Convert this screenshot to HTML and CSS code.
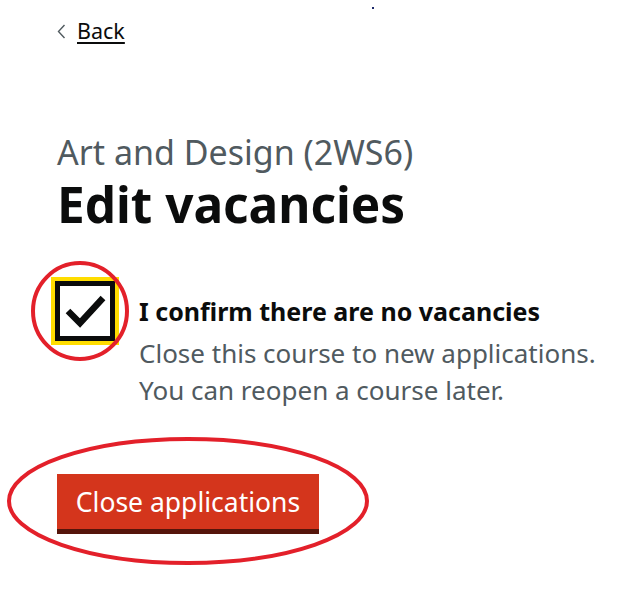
FILE: index.html
```html
<!DOCTYPE html>
<html lang="en">
<head>
<meta charset="utf-8">
<title>Edit vacancies</title>
<link rel="stylesheet" href="styles.css">
</head>
<body>
<div class="page">
  <span class="dot"></span>
  <a class="back" href="#"><svg class="chev" width="9" height="15" viewBox="0 0 9 15"><path d="M7.5 1 L1.5 7.5 L7.5 14" fill="none" stroke="#505a5f" stroke-width="1.4"/></svg><span class="back-text">Back</span></a>
  <span class="caption">Art and Design (2WS6)</span>
  <h1 class="title">Edit vacancies</h1>
  <div class="check">
    <div class="box-wrap">
      <div class="box">
        <svg class="tick" width="50" height="50" viewBox="0 0 50 50"><path d="M8 25 L20 37 L43 12" fill="none" stroke="#0b0c0c" stroke-width="6.5"/></svg>
      </div>
      <svg class="ring" width="104" height="104" viewBox="0 0 104 104"><ellipse cx="52" cy="52" rx="47" ry="48" fill="none" stroke="#e3202a" stroke-width="4"/></svg>
    </div>
    <div class="check-text">
      <div class="label">I confirm there are no vacancies</div>
      <div class="hint">Close this course to new applications.<br>You can reopen a course later.</div>
    </div>
  </div>
  <div class="btn-wrap">
    <button class="btn">Close applications</button>
    <svg class="oval" width="366" height="132" viewBox="0 0 366 132"><ellipse cx="183" cy="66" rx="179" ry="62" fill="none" stroke="#e3202a" stroke-width="4"/></svg>
  </div>
</div>
</body>
</html>
```

FILE: styles.css
```css
html, body {
  margin: 0;
  padding: 0;
  background: #ffffff;
}
body {
  font-family: "Noto Sans", "Liberation Sans", sans-serif;
  color: #0b0c0c;
}
.page {
  position: relative;
  padding: 18px 0 0 57px;
  width: 560px;
  height: 577px;
}
.dot {
  position: absolute;
  left: 372px;
  top: 7px;
  width: 2px;
  height: 2px;
  background: #1d2a6a;
}
.back {
  display: inline-flex;
  align-items: center;
  gap: 11px;
  color: #0b0c0c;
  text-decoration: none;
  font-size: 21.5px;
  line-height: 25px;
  height: 25px;
}
.chev {
  display: block;
  margin-top: 2px;
}
.back-text {
  text-decoration: underline;
  text-decoration-thickness: 2px;
  text-underline-offset: 3px;
}
.caption {
  display: block;
  margin-top: 89px;
  font-size: 34px;
  line-height: 38px;
  color: #505a5f;
}
.title {
  margin: 6px 0 0 0;
  font-size: 49.5px;
  line-height: 55px;
  font-weight: 700;
}
.check {
  display: flex;
  align-items: flex-start;
  margin-top: 45px;
  margin-left: -6px;
}
.box-wrap {
  position: relative;
  width: 68px;
  height: 68px;
  flex: none;
}
.box {
  margin: 4px;
  width: 50px;
  height: 50px;
  border: 5px solid #0b0c0c;
  background: #fff;
  box-shadow: 0 0 0 4px #ffdd00;
}
.tick {
  display: block;
}
.ring {
  position: absolute;
  left: -23px;
  top: -18px;
}
.check-text {
  margin-left: 20px;
  padding-top: 17px;
}
.label {
  font-size: 25px;
  line-height: 34px;
  font-weight: 700;
}
.hint {
  margin-top: 7px;
  font-size: 26px;
  line-height: 37px;
  color: #505a5f;
}
.btn-wrap {
  position: relative;
  margin-top: 65px;
  width: 262px;
}
.btn {
  display: block;
  width: 262px;
  height: 55px;
  border: 0;
  padding: 0;
  margin: 0;
  background: #d4351c;
  color: #ffffff;
  font-family: "Noto Sans", "Liberation Sans", sans-serif;
  font-size: 26.5px;
  line-height: 56px;
  box-shadow: 0 5px 0 #55150b;
}
.oval {
  position: absolute;
  left: -52px;
  top: -39px;
}
```
